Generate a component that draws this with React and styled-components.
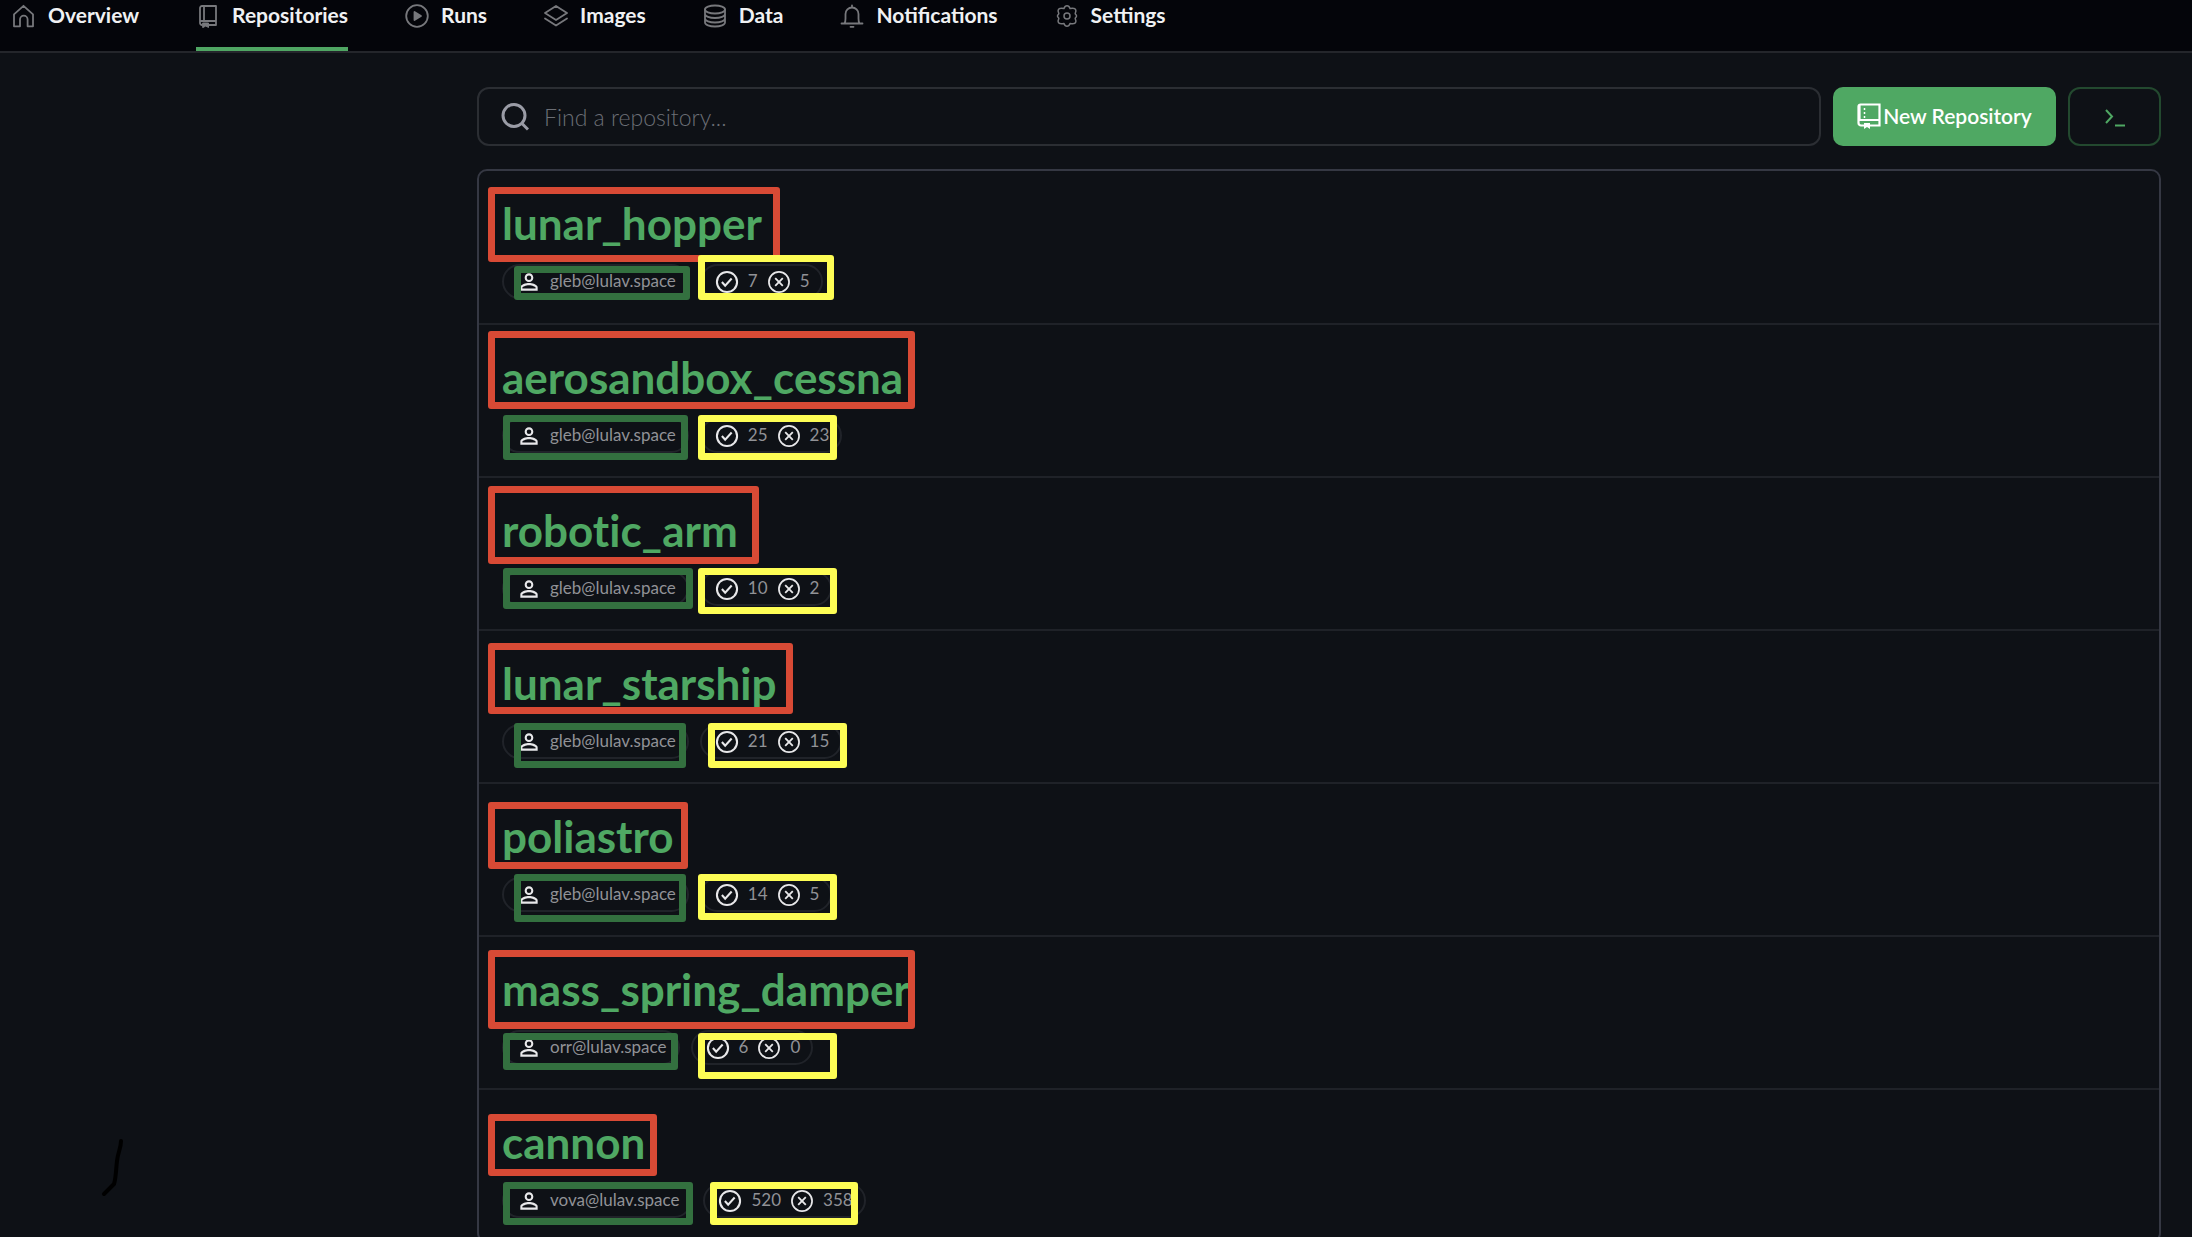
import React from "react";
import styled, { createGlobalStyle } from "styled-components";
import { MdPersonOutline } from "react-icons/md";

const GlobalStyle = createGlobalStyle`
  * { box-sizing: border-box; }
  body {
    margin: 0;
    background: #0e1116;
    color: #f0f1f3;
    font-family: Lato, "Liberation Sans", sans-serif;
  }
`;

const Page = styled.div`
  position: relative;
  height: 100vh;
  overflow: hidden;
`;

const Nav = styled.nav`
  display: flex;
  gap: 57px;
  padding-left: 12px;
  background: #04050a;
  border-bottom: 2px solid #24262b;
`;

const NavLink = styled.a`
  display: flex;
  align-items: center;
  gap: 12px;
  height: 51px;
  padding-bottom: 16px;
  border-bottom: 4px solid ${(p) => (p.$active ? "#4fa663" : "transparent")};
  color: #f0f1f3;
  font-size: 21px;
  font-weight: 700;
  line-height: 28px;
  text-decoration: none;
`;

const NavLabel = styled.span`
  padding-bottom: 2px;
`;

const NavIcon = styled.svg`
  width: 24px;
  height: 24px;
  fill: none;
  stroke: #77787c;
  stroke-width: 1.8;
  stroke-linecap: round;
  stroke-linejoin: round;
`;

const Main = styled.main`
  display: flex;
  flex-direction: column;
  gap: 23px;
  margin-left: 477px;
  margin-right: 31px;
  padding-top: 34px;
`;

const Toolbar = styled.div`
  display: flex;
  gap: 12px;
  height: 59px;
`;

const SearchBox = styled.label`
  display: flex;
  flex: 1;
  align-items: center;
  gap: 15px;
  padding: 0 22px;
  border: 2px solid #2b2e33;
  border-radius: 12px;
`;

const SearchInput = styled.input`
  flex: 1;
  padding: 0;
  border: 0;
  outline: 0;
  background: transparent;
  color: #f0f1f3;
  font: 300 23px/32px Lato, sans-serif;
  &::placeholder { color: #6b6e75; opacity: 1; }
`;

const NewButton = styled.button`
  display: flex;
  align-items: center;
  justify-content: center;
  gap: 2px;
  width: 223px;
  padding: 0 0 2px;
  border: 0;
  border-radius: 10px;
  background: #4fa863;
  color: #fff;
  font: 600 21px/28px Lato, sans-serif;
`;

const TerminalButton = styled.button`
  display: grid;
  place-items: center;
  width: 93px;
  padding: 2px 0 0;
  border: 2px solid #23492f;
  border-radius: 12px;
  background: transparent;
  color: #4fa863;
`;

const List = styled.ul`
  margin: 0;
  padding: 0;
  list-style: none;
  border: 2px solid #353843;
  border-radius: 10px;
`;

const Row = styled.li`
  height: 152px;
  padding: 25px 23px 0;
  & + & {
    height: 153px;
    border-top: 2px solid #1f2228;
  }
`;

const RepoLink = styled.a`
  display: block;
  width: max-content;
  color: #4fa863;
  font-size: 44px;
  font-weight: 700;
  font-variant-ligatures: none;
  line-height: 54px;
  text-decoration: none;
`;

const Pills = styled.div`
  display: flex;
  gap: 11px;
  margin-top: 14px;
`;

const Pill = styled.span`
  display: flex;
  align-items: center;
  gap: 8px;
  height: 35px;
  padding: 0 11px 0 12px;
  border: 2px solid #202329;
  border-radius: 18px;
  color: #919296;
  font-size: 17px;
  line-height: 24px;
  svg { color: #e8e8ea; flex: none; }
`;

const PillText = styled.span`
  padding-bottom: 2px;
`;

const StatusSvg = styled.svg`
  width: 26px;
  height: 26px;
  fill: none;
  stroke: currentColor;
  stroke-width: 1.9;
`;

const Mark = styled.div`
  position: absolute;
  left: ${(p) => p.$x}px;
  top: ${(p) => p.$y}px;
  width: ${(p) => p.$r - p.$x}px;
  height: ${(p) => p.$b - p.$y}px;
  border: 7px solid ${(p) => p.$color};
  border-radius: 3px;
  pointer-events: none;
`;

const Scribble = styled.svg`
  position: absolute;
  left: 100px;
  top: 1136px;
`;

const PassedIcon = () => (
  <StatusSvg viewBox="0 0 24 24" role="img" aria-label="passed">
    <circle cx="12" cy="12" r="9.300" />
    <path d="m7.300 12 3 3.400 6-6.600" />
  </StatusSvg>
);

const FailedIcon = () => (
  <StatusSvg viewBox="0 0 24 24" role="img" aria-label="failed">
    <circle cx="12" cy="12" r="9.300" strokeWidth="1.600" />
    <path d="m8.500 8.500 7 7m0-7-7 7" strokeWidth="1.700" />
  </StatusSvg>
);

const navItems = [
  ["Overview", <path key="p" d="M2 10.300 11.500 1.800 21 10.300V22.300h-5.400v-6.800a3.800 3.800 0 0 0-7.600 0v6.800H2Z" />],
  ["Repositories", <g key="p"><path d="M4 19V4a2 2 0 0 1 2-2h14v19h-7M4 17h16M8 2v15M6 21c-1.200 0-2-.9-2-2" /><path d="M7 19h5.500v4.500L9.800 22 7 23.500Z" fill="#77787c" strokeWidth="1" /></g>],
  ["Runs", <g key="p"><circle cx="12" cy="12" r="10.800" /><path d="M9.500 8v8l6.500-4Z" fill="#77787c" /></g>],
  ["Images", <path key="p" d="m12 2 11 7-11 7L1 9ZM1 14.500l11 7 11-7" />],
  ["Data", <g key="p"><ellipse cx="12" cy="5.500" rx="10" ry="4" /><path d="M2 5.500v13c0 2.200 4.500 4 10 4s10-1.800 10-4v-13M2 10c0 2.200 4.500 4 10 4s10-1.800 10-4M2 14.500c0 2.200 4.500 4 10 4s10-1.800 10-4" /></g>],
  ["Notifications", <path key="p" d="M1.500 19.500h21M4.500 19.500c1-1.500 1-3 1-5V10a6.500 6.500 0 0 1 13 0v4.500c0 2 0 3.500 1 5M12 3.500V1.500M10.500 22.800h3" />],
  ["Settings", <g key="p" strokeWidth="1.500"><circle cx="12" cy="12" r="3" /><path d="M9 4.500c.6-1.800 1.500-2.800 3-2.800s2.400 1 3 2.800c3-.7 5.300-.2 5.800 1.500.5 1.600-.6 2.600-.6 3.500 0 .8 1.300 1.300 1.300 2.500s-1.300 1.700-1.300 2.500c0 .9 1.100 1.900.6 3.500-.5 1.700-2.800 2.200-5.800 1.500-.6 1.800-1.500 2.800-3 2.800s-2.400-1-3-2.800c-3 .7-5.300.2-5.800-1.500-.5-1.600.6-2.600.6-3.500 0-.8-1.300-1.300-1.300-2.500s1.300-1.700 1.300-2.500c0-.9-1.100-1.900-.6-3.500C3.700 4.300 6 3.800 9 4.500Z" /></g>],
];

const repos = [
  ["lunar_hopper", "gleb@lulav.space", 7, 5],
  ["aerosandbox_cessna", "gleb@lulav.space", 25, 23],
  ["robotic_arm", "gleb@lulav.space", 10, 2],
  ["lunar_starship", "gleb@lulav.space", 21, 15],
  ["poliastro", "gleb@lulav.space", 14, 5],
  ["mass_spring_damper", "orr@lulav.space", 6, 0],
  ["cannon", "vova@lulav.space", 520, 358],
];

const RED = "#d84a35";
const GREEN = "#33703f";
const YELLOW = "#fdfd55";

// left, top, right, bottom, colour
const marks = [
  [488, 187, 780, 262, RED], [514, 266, 690, 300, GREEN], [698, 255, 834, 300, YELLOW],
  [488, 331, 915, 409, RED], [503, 415, 688, 460, GREEN], [698, 415, 837, 460, YELLOW],
  [488, 486, 759, 564, RED], [503, 568, 693, 609, GREEN], [698, 568, 837, 614, YELLOW],
  [488, 643, 793, 714, RED], [514, 723, 686, 768, GREEN], [708, 723, 847, 768, YELLOW],
  [488, 802, 688, 869, RED], [514, 874, 686, 922, GREEN], [698, 874, 837, 920, YELLOW],
  [488, 950, 915, 1029, RED], [503, 1033, 678, 1070, GREEN], [698, 1033, 837, 1079, YELLOW],
  [488, 1114, 657, 1176, RED], [503, 1182, 693, 1225, GREEN], [710, 1182, 858, 1225, YELLOW],
];

export default function App() {
  return (
    <Page>
      <GlobalStyle />
      <Nav>
        {navItems.map(([label, icon]) => (
          <NavLink key={label} href="#" $active={label === "Repositories"}>
            <NavIcon viewBox="0 0 24 24" aria-hidden="true">{icon}</NavIcon>
            <NavLabel>{label}</NavLabel>
          </NavLink>
        ))}
      </Nav>
      <Main>
        <Toolbar>
          <SearchBox>
            <svg width="28" height="28" viewBox="0 0 28 28" fill="none" stroke="#9a9ca6" strokeWidth="3" aria-hidden="true">
              <circle cx="13" cy="12.500" r="11" /><path d="m20.500 20 6.500 6.500" />
            </svg>
            <SearchInput aria-label="Find a repository" placeholder="Find a repository..." />
          </SearchBox>
          <NewButton type="button">
            <svg width="24" height="26" viewBox="0 0 24 26" fill="none" stroke="#fff" strokeWidth="2.200" aria-hidden="true">
              <path d="M7 22.500H4a2.500 2.500 0 0 1-2.500-2.500V3.500A2 2 0 0 1 3.500 1.500h19v21H13M1.500 17h21M2.500 2v15" />
              <path d="M7.500 5v10" strokeDasharray="2 2" strokeWidth="1.500" />
              <path d="M7 20h6v6l-3-2-3 2Z" fill="#fff" stroke="none" />
            </svg>
            New Repository
          </NewButton>
          <TerminalButton type="button" aria-label="Command line">
            <svg width="20" height="18" viewBox="0 0 20 18" fill="none" stroke="currentColor" strokeWidth="2" aria-hidden="true">
              <path d="m1 1 6 6.500L1 14M10 16.500h10" />
            </svg>
          </TerminalButton>
        </Toolbar>
        <List>
          {repos.map(([name, owner, passed, failed]) => (
            <Row key={name}>
              <RepoLink href="#">{name}</RepoLink>
              <Pills>
                <Pill><MdPersonOutline size={26} /><PillText>{owner}</PillText></Pill>
                <Pill>
                  <PassedIcon /><PillText>{passed}</PillText>
                  <FailedIcon /><PillText>{failed}</PillText>
                </Pill>
              </Pills>
            </Row>
          ))}
        </List>
      </Main>
      {marks.map(([x, y, r, b, color]) => (
        <Mark key={`${x}-${y}`} $x={x} $y={y} $r={r} $b={b} $color={color} />
      ))}
      <Scribble width="30" height="64" viewBox="0 0 30 64" fill="none" stroke="#000" strokeWidth="4" strokeLinecap="round" strokeLinejoin="round" aria-hidden="true">
        <path d="M21 5c0 7-3 11-4 20-1 8-1 17-3 23L4 58" />
      </Scribble>
    </Page>
  );
}
